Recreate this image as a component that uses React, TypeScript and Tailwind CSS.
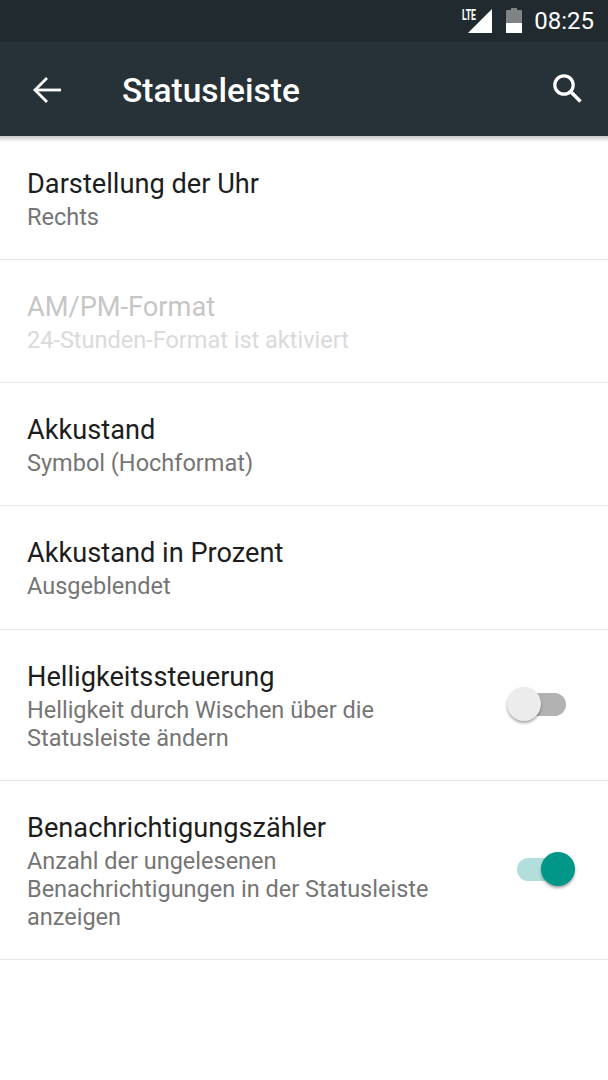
import React from "react";

type Row = {
  title: string;
  sub: string[];
  disabled?: boolean;
  toggle?: "on" | "off";
  h: string;
};

const rows: Row[] = [
  { title: "Darstellung der Uhr", sub: ["Rechts"], h: "h-[123px]" },
  { title: "AM/PM-Format", sub: ["24-Stunden-Format ist aktiviert"], disabled: true, h: "h-[123px]" },
  { title: "Akkustand", sub: ["Symbol (Hochformat)"], h: "h-[123px]" },
  { title: "Akkustand in Prozent", sub: ["Ausgeblendet"], h: "h-[124px]" },
  {
    title: "Helligkeitssteuerung",
    sub: ["Helligkeit durch Wischen über die", "Statusleiste ändern"],
    toggle: "off",
    h: "h-[151px]",
  },
  {
    title: "Benachrichtigungszähler",
    sub: ["Anzahl der ungelesenen", "Benachrichtigungen in der Statusleiste", "anzeigen"],
    toggle: "on",
    h: "h-[179px]",
  },
];

const Toggle: React.FC<{ on: boolean }> = ({ on }) => (
  <div className="relative w-[68px] h-[34px] shrink-0">
    <div className={`absolute top-[6px] left-[10px] w-[49px] h-[23px] rounded-full ${on ? "bg-[#b2dfdb]" : "bg-[#b2b2b2]"}`} />
    <div
      className={`absolute top-0 w-[34px] h-[34px] rounded-full shadow-[0_2px_3px_rgba(0,0,0,0.35)] ${
        on ? "left-[34px] bg-[#009688]" : "left-0 bg-[#ececec]"
      }`}
    />
  </div>
);

const App: React.FC = () => {
  return (
    <div className="w-[608px] h-[1080px] bg-white overflow-hidden font-['Roboto',sans-serif]">
      {/* status bar */}
      <div className="h-[42px] bg-[#212a2f] flex items-center justify-end pr-[14px]">
        <div className="relative w-[30px] h-[24px] mr-[14px]">
          <svg viewBox="0 0 30 24" className="absolute inset-0 w-[30px] h-[24px]">
            <path d="M6 24 L30 0 V24 Z" fill="#fff" />
          </svg>
          <span className="absolute left-0 top-[-2px] text-[14px] leading-[16px] font-bold text-white scale-x-[0.62] origin-left">LTE</span>
        </div>
        <svg viewBox="0 0 16 25" className="w-[16px] h-[25px] mr-[12px] mt-[-1px]">
          <path d="M5 0 H11 V2 H15 Q16 2 16 3 V15 H0 V3 Q0 2 1 2 H5 Z" fill="#7f8385" />
          <rect x="0" y="15" width="16" height="10" fill="#fff" />
        </svg>
        <span className="text-white text-[24px] leading-[28px] font-normal">08:25</span>
      </div>

      {/* toolbar */}
      <div className="relative h-[94px] bg-[#263238] flex items-center">
        <svg viewBox="0 0 28 26" className="w-[28px] h-[26px] ml-[33px] mt-[1px]" fill="none" stroke="#fff" strokeWidth="2.8">
          <path d="M28 13 H3" />
          <path d="M14 1 L2 13 L14 25" />
        </svg>
        <span className="ml-[61px] mt-[4px] text-white text-[33.5px] leading-[40px] font-medium">Statusleiste</span>
        <svg viewBox="0 0 32 32" className="w-[32px] h-[32px] ml-auto mr-[25px]" fill="none" stroke="#fff" strokeWidth="3.2">
          <circle cx="13" cy="12" r="9.2" />
          <path d="M19.5 18.5 L29.5 28.5" strokeWidth="3.6" />
        </svg>
        <div className="absolute left-0 right-0 top-full h-[6px] bg-gradient-to-b from-[#c9c9c9] to-white" />
      </div>

      {/* list */}
      <div className="mt-[1px]">
        {rows.map((r) => (
          <div key={r.title} className={`${r.h} border-b border-[#e6e6e6] flex items-start pl-[27px] pt-[30px]`}>
            <div className="flex-1 min-w-0">
              <div className={`text-[27.2px] leading-[34px] mb-[2px] ${r.disabled ? "text-[#c6c6c6]" : "text-[#1d1d1d]"}`}>{r.title}</div>
              {r.sub.map((s) => (
                <div key={s} className={`text-[23.5px] leading-[28px] ${r.disabled ? "text-[#dadada]" : "text-[#757575]"}`}>
                  {s}
                </div>
              ))}
            </div>
            {r.toggle && (
              <div className={r.toggle === "on" ? "mt-[41px] mr-[33px]" : "mt-[27px] mr-[33px]"}>
                <Toggle on={r.toggle === "on"} />
              </div>
            )}
          </div>
        ))}
      </div>
    </div>
  );
};

export default App;
